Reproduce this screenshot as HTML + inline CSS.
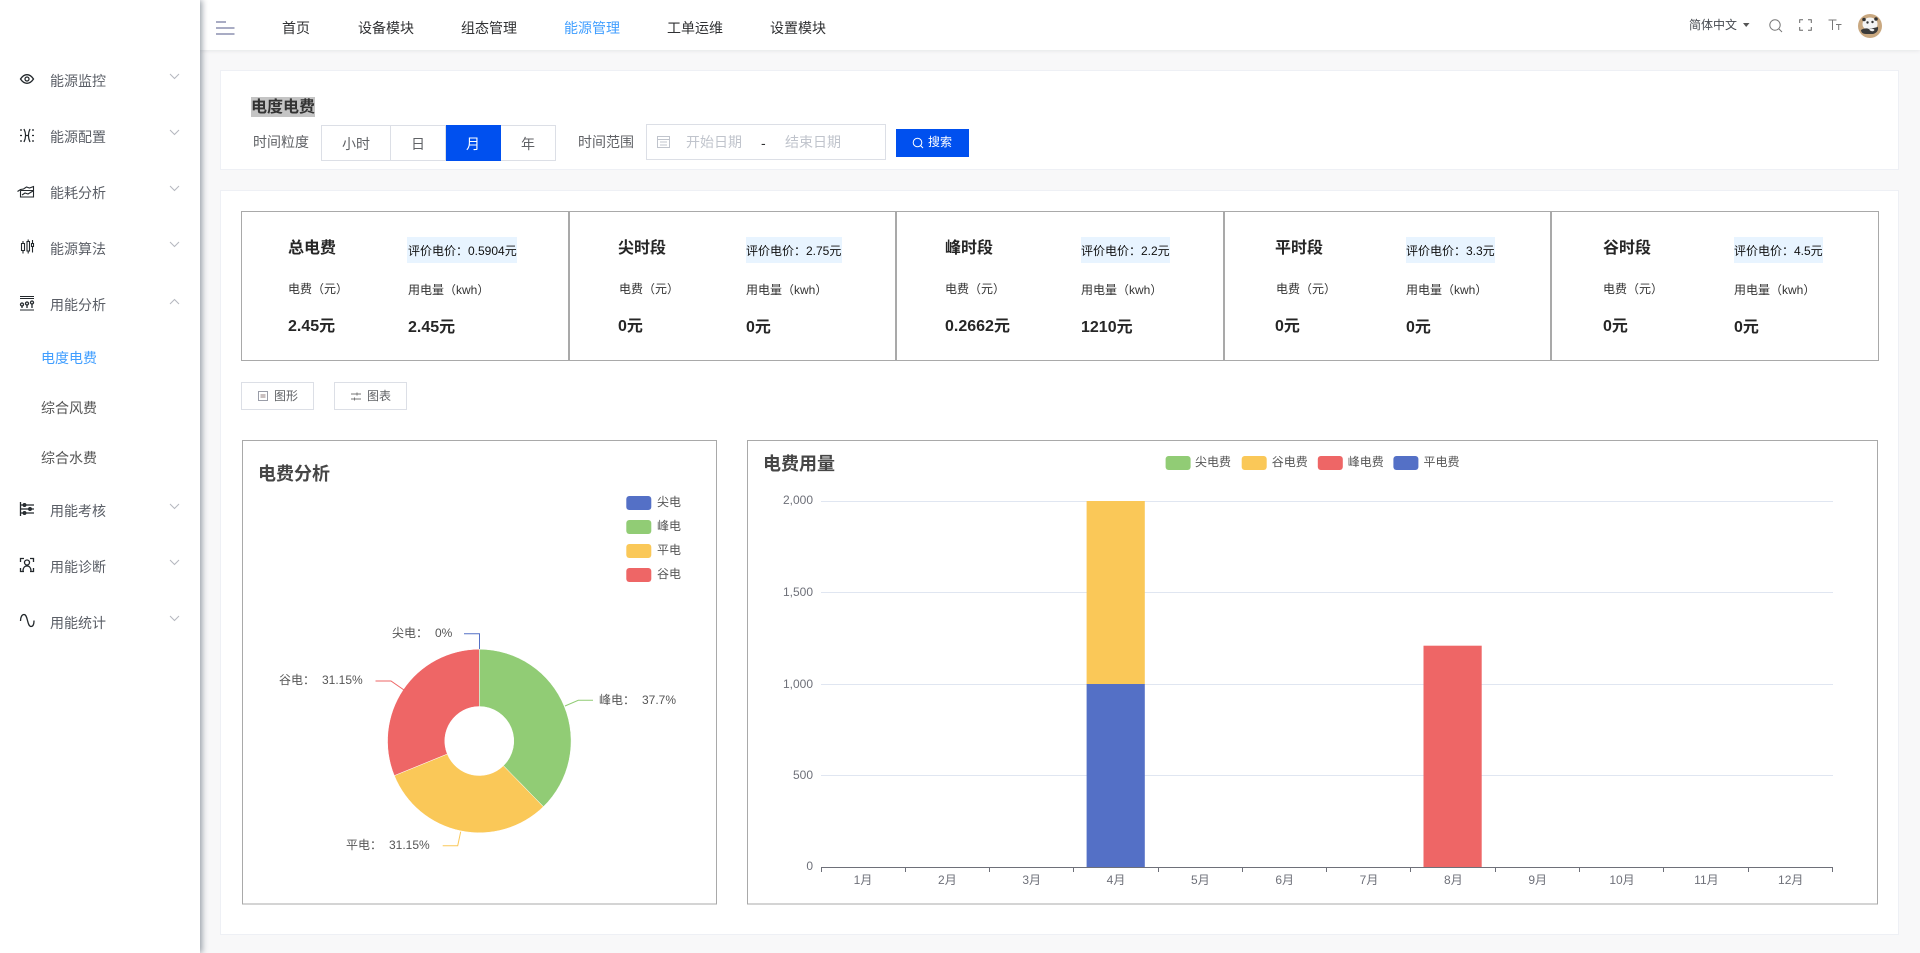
<!DOCTYPE html>
<html lang="zh"><head><meta charset="utf-8"><title>电度电费</title>
<style>
*{box-sizing:border-box}
html,body{margin:0;padding:0;width:1920px;height:953px;overflow:hidden;background:#f8f8f9;font-family:"Liberation Sans","Noto Sans CJK SC",sans-serif;color:#303133}
.a{position:absolute}
.t{position:absolute;white-space:nowrap;line-height:20px;font-size:14px}
#side{left:0;top:0;width:200px;height:953px;background:#fff;box-shadow:2px 0 6px rgba(0,21,41,.4);z-index:3}
#head{left:200px;top:0;width:1720px;height:50px;background:#fff;box-shadow:0 1px 4px rgba(0,21,41,.08)}
.panel{position:absolute;background:#fff;border:1px solid #eef0f5}
.m{color:#5a5e66}
.s{color:#555}
.cell{position:absolute;top:211px;height:150px;border:1px solid #a9a9a9}
.h{font-size:16px;font-weight:bold;color:#262626}
.l{font-size:12px;color:#333}
.b{position:absolute;top:237px;height:26px;background:#e8f4ff;font-size:12px;line-height:28px;color:#111;white-space:nowrap}
.v{font-size:16px;font-weight:bold;color:#262626}
.seg{position:absolute;top:125px;height:36px;border:1px solid #dcdfe6;border-left:0;text-align:center;line-height:36px;font-size:14px;color:#606266;background:#fff}
.btn{position:absolute;top:382px;width:73px;height:28px;border:1px solid #dcdfe6;background:#fff}
</style></head><body>

<div class="a" id="head"></div>
<svg class="a" style="left:216px;top:21px;z-index:4" width="19" height="16" viewBox="0 0 19 16"><path d="M0 1h10M0 7h18.500M0 13h18.500" stroke="#a9acc4" stroke-width="2" fill="none"/></svg>
<div class="t" style="left:282px;top:18px">首页</div>
<div class="t" style="left:358px;top:18px">设备模块</div>
<div class="t" style="left:461px;top:18px">组态管理</div>
<div class="t" style="left:564px;top:18px;color:#409eff">能源管理</div>
<div class="t" style="left:667px;top:18px">工单运维</div>
<div class="t" style="left:770px;top:18px">设置模块</div>
<div class="t" style="left:1689px;top:15px;font-size:12px;color:#45494f">简体中文</div>
<svg class="a" style="left:1742px;top:22px" width="8" height="6"><path d="M1 1h6.500L4.200 5z" fill="#555"/></svg>
<svg class="a" style="left:1768px;top:18px" width="15" height="15" viewBox="0 0 15 15"><circle cx="7" cy="7" r="5.200" stroke="#777" stroke-width="1" fill="none"/><path d="M11 11l3 3" stroke="#777" stroke-width="1"/></svg>
<svg class="a" style="left:1799px;top:19px" width="13" height="12" viewBox="0 0 13 12"><path d="M.7 4V.7H4M9 .7h3.300V4M12.300 8v3.300H9M4 11.300H.7V8" stroke="#666" stroke-width="1" fill="none"/></svg>
<svg class="a" style="left:1828px;top:19px" width="14" height="12" viewBox="0 0 14 12"><path d="M.5 1h8M4.500 1v10M8 5.500h5.500M10.700 5.500v5.500" stroke="#777" stroke-width="1" fill="none"/></svg>
<svg class="a" style="left:1858px;top:14px" width="24" height="24" viewBox="0 0 24 24"><circle cx="12" cy="12" r="12" fill="#c9a880"/><ellipse cx="12" cy="10" rx="7.500" ry="6.500" fill="#f4f4f4"/><circle cx="6" cy="5.500" r="1.800" fill="#333"/><circle cx="18" cy="5" r="1.800" fill="#333"/><circle cx="9.500" cy="8.500" r="1.200" fill="#333"/><circle cx="14.500" cy="8" r="1.200" fill="#333"/><path d="M3 16c3-2 6-2 8-1l9-2c.5 4-1.500 6-5 7H8c-3 0-5-1.500-5-4z" fill="#3a3a3a"/><path d="M11 15.500c2-1 4.500-1 5.500.5-1 1.800-3.500 1.800-5.500-.5z" fill="#eee"/></svg>

<div class="a" id="side">
<div class="t m" style="left:50px;top:71px">能源监控</div>
<div class="t m" style="left:50px;top:127px">能源配置</div>
<div class="t m" style="left:50px;top:183px">能耗分析</div>
<div class="t m" style="left:50px;top:239px">能源算法</div>
<div class="t m" style="left:50px;top:295px">用能分析</div>
<div class="t" style="left:41px;top:348px;color:#409eff">电度电费</div>
<div class="t s" style="left:41px;top:398px">综合风费</div>
<div class="t s" style="left:41px;top:448px">综合水费</div>
<div class="t m" style="left:50px;top:501px">用能考核</div>
<div class="t m" style="left:50px;top:557px">用能诊断</div>
<div class="t m" style="left:50px;top:613px">用能统计</div>
<svg class="a" style="left:0;top:0" width="200" height="640" fill="none" stroke="#23282c" stroke-width="1.300">
<path d="M20.500 79c2-3 4.500-4.300 6.500-4.300s4.500 1.300 6.500 4.300c-2 3-4.500 4.300-6.500 4.300s-4.500-1.300-6.500-4.300z"/><circle cx="27" cy="79" r="2"/>
<path d="M24 129c2 4 2 9 0 13M30 129c-2 4-2 9 0 13M25 135.500h4M20 130h2M20 135.500h2M20 141h2M32 130h2M32 135.500h2M32 141h2"/>
<path d="M20.500 190.500h13M20.500 190.500v6.500h13v-10.500l-4 1.500-3-1-3 2-3 .5-3 2M22 195l3-2 3 1 5-3" stroke-width="1.100"/>
<path d="M21.500 243.500h3v7h-3zM27 241.500h2.500v9.500H27zM31.500 243.500h2v3h-2zM23 241v2.500M23 250.500v3M28.200 239.500v2M28.200 251v2.500M32.500 240v3.500M32.500 246.500v6" stroke-width="1.100"/>
<path d="M20 296.500h14M20 310h14M20 298.500h14" stroke-width="1"/><path d="M22 308v-2M27 308v-3M32 308v-4"/><circle cx="22" cy="304.500" r="1.500"/><circle cx="27" cy="303.500" r="1.500"/><circle cx="32" cy="302.500" r="1.500"/>
<path d="M20.500 502v14M21 505h13M21 509h13M21 513h13"/><circle cx="24.500" cy="505" r="1.300"/><circle cx="30" cy="509" r="1.300"/><circle cx="24.500" cy="513" r="1.300"/>
<path d="M20.500 562v-3.500H24M30 558.500h3.500V562M33.500 568v3.500H30M24 571.500h-3.500V568"/><circle cx="27" cy="562.500" r="2.500"/><path d="M23 571c0-3 1.500-5 4-5s4 2 4 5"/>
<path d="M20.500 621c0-4 1.500-6.500 3.500-6.500 4 0 3 12 7 12 2 0 3-2 3-6"/>
<g stroke="#b5b8bf" stroke-width="1"><path d="M170 74l4.500 4.500 4.500-4.500M170 130l4.500 4.500 4.500-4.500M170 186l4.500 4.500 4.500-4.500M170 242l4.500 4.500 4.500-4.500M170 304l4.500-4.500 4.500 4.500M170 504l4.500 4.500 4.500-4.500M170 560l4.500 4.500 4.500-4.500M170 616l4.500 4.500 4.500-4.500"/></g>
</svg>
</div>

<div class="panel" style="left:220px;top:70px;width:1679px;height:100px"></div>
<div class="t" style="left:251px;top:97px;height:20px;width:64px;background:#c4c4c4;font-size:16px;line-height:22px;font-weight:bold;color:#333">电度电费</div>
<div class="t" style="left:253px;top:132px;color:#606266">时间粒度</div>
<div class="seg" style="left:321px;width:70px;border-left:1px solid #dcdfe6">小时</div>
<div class="seg" style="left:391px;width:55px">日</div>
<div class="seg" style="left:446px;width:55px;background:#0050ef;color:#fff;border-color:#0050ef">月</div>
<div class="seg" style="left:501px;width:55px">年</div>
<div class="t" style="left:578px;top:132px;color:#606266">时间范围</div>
<div class="a" style="left:646px;top:124px;width:240px;height:36px;border:1px solid #dcdfe6;background:#fff"></div>
<svg class="a" style="left:657px;top:135px" width="13" height="13" viewBox="0 0 13 13" fill="none" stroke="#c0c4cc"><path d="M.5 1.500h12v11H.5zM.5 4.500h12M3 7h7M3 10h7"/></svg>
<div class="t" style="left:686px;top:132px;color:#c0c4cc">开始日期</div>
<div class="t" style="left:761px;top:133px;color:#303133">-</div>
<div class="t" style="left:785px;top:132px;color:#c0c4cc">结束日期</div>
<div class="a" style="left:896px;top:129px;width:73px;height:28px;background:#0050ef"></div>
<svg class="a" style="left:912px;top:137px" width="12" height="12" viewBox="0 0 12 12" fill="none" stroke="#fff" stroke-width="1"><circle cx="5.500" cy="5.500" r="4.300"/><path d="M8.500 8.500l2.500 2.500"/></svg>
<div class="t" style="left:928px;top:132px;font-size:12px;color:#fff">搜索</div>

<div class="panel" style="left:220px;top:190px;width:1679px;height:745px"></div>

<div class="cell" style="left:241px;width:328px"></div>
<div class="cell" style="left:569px;width:327px"></div>
<div class="cell" style="left:896px;width:328px"></div>
<div class="cell" style="left:1224px;width:327px"></div>
<div class="cell" style="left:1551px;width:328px"></div>

<div class="t h" style="left:288px;top:239px">总电费</div>
<div class="b" style="left:407px;width:110px;padding-left:1px">评价电价：0.5904元</div>
<div class="t l" style="left:288px;top:279px">电费（元）</div>
<div class="t l" style="left:408px;top:280px">用电量（kwh）</div>
<div class="t v" style="left:288px;top:317px">2.45元</div>
<div class="t v" style="left:408px;top:318px">2.45元</div>

<div class="t h" style="left:618px;top:239px">尖时段</div>
<div class="b" style="left:746px;width:96px">评价电价：2.75元</div>
<div class="t l" style="left:619px;top:279px">电费（元）</div>
<div class="t l" style="left:746px;top:280px">用电量（kwh）</div>
<div class="t v" style="left:618px;top:317px">0元</div>
<div class="t v" style="left:746px;top:318px">0元</div>

<div class="t h" style="left:945px;top:239px">峰时段</div>
<div class="b" style="left:1081px;width:89px">评价电价：2.2元</div>
<div class="t l" style="left:945px;top:279px">电费（元）</div>
<div class="t l" style="left:1081px;top:280px">用电量（kwh）</div>
<div class="t v" style="left:945px;top:317px">0.2662元</div>
<div class="t v" style="left:1081px;top:318px">1210元</div>

<div class="t h" style="left:1275px;top:239px">平时段</div>
<div class="b" style="left:1406px;width:89px">评价电价：3.3元</div>
<div class="t l" style="left:1276px;top:279px">电费（元）</div>
<div class="t l" style="left:1406px;top:280px">用电量（kwh）</div>
<div class="t v" style="left:1275px;top:317px">0元</div>
<div class="t v" style="left:1406px;top:318px">0元</div>

<div class="t h" style="left:1603px;top:239px">谷时段</div>
<div class="b" style="left:1734px;width:89px">评价电价：4.5元</div>
<div class="t l" style="left:1603px;top:279px">电费（元）</div>
<div class="t l" style="left:1734px;top:280px">用电量（kwh）</div>
<div class="t v" style="left:1603px;top:317px">0元</div>
<div class="t v" style="left:1734px;top:318px">0元</div>

<div class="btn" style="left:241px"></div>
<div class="btn" style="left:334px"></div>
<svg class="a" style="left:258px;top:391px" width="10" height="10" fill="none"><rect x=".5" y=".5" width="9" height="9" stroke="#9a9da8"/><rect x="2.500" y="3" width="5" height="4" fill="#c9c0c0"/></svg>
<svg class="a" style="left:351px;top:392px" width="10" height="9" fill="none" stroke="#777"><path d="M0 2h10M0 7h10M6 .5v3M3.500 5.500v3"/></svg>
<div class="t" style="left:274px;top:386px;font-size:12px;color:#606266">图形</div>
<div class="t" style="left:367px;top:386px;font-size:12px;color:#606266">图表</div>

<svg class="a" style="left:0;top:0" width="1920" height="953" font-family="'Liberation Sans','Noto Sans CJK SC',sans-serif" font-size="12" fill="#555">
<rect x="242.500" y="440.500" width="474" height="463.500" fill="#fff" stroke="#a9a9a9" stroke-width="1"/>
<rect x="747.500" y="440.500" width="1130" height="463.500" fill="#fff" stroke="#a9a9a9" stroke-width="1"/>
<text x="258" y="480" font-size="18" font-weight="bold" fill="#464646">电费分析</text>
<text x="763" y="470" font-size="18" font-weight="bold" fill="#464646">电费用量</text>

<rect x="626.300" y="496" width="25" height="14" rx="3" fill="#5470c6"/><text x="657" y="506">尖电</text>
<rect x="626.300" y="520" width="25" height="14" rx="3" fill="#91cc75"/><text x="657" y="530">峰电</text>
<rect x="626.300" y="544" width="25" height="14" rx="3" fill="#fac858"/><text x="657" y="554">平电</text>
<rect x="626.300" y="568" width="25" height="14" rx="3" fill="#ee6666"/><text x="657" y="578">谷电</text>

<path d="M479.300 649.200A91.800 91.800 0 0 1 543.400 806.700L503.400 765.700A34.500 34.500 0 0 0 479.300 706.500Z" fill="#91cc75" stroke="#fff" stroke-width=".5"/>
<path d="M543.400 806.700A91.800 91.800 0 0 1 394.300 775.600L447.300 754A34.500 34.500 0 0 0 503.400 765.700Z" fill="#fac858" stroke="#fff" stroke-width=".5"/>
<path d="M394.300 775.600A91.800 91.800 0 0 1 479.300 649.200L479.300 706.500A34.500 34.500 0 0 0 447.300 754Z" fill="#ee6666" stroke="#fff" stroke-width=".5"/>
<g fill="none"><path d="M464 633.700h15.500V649" stroke="#5470c6"/><path d="M375.500 681H391l13 9" stroke="#ee6666"/><path d="M593 700.300h-14.700L565 706" stroke="#91cc75"/><path d="M442.700 845.700h15l3-14" stroke="#fac858"/></g>
<text x="392" y="637">尖电：</text><text x="435" y="637">0%</text>
<text x="279" y="684">谷电：</text><text x="322" y="684">31.15%</text>
<text x="599" y="704">峰电：</text><text x="642" y="704">37.7%</text>
<text x="346" y="849">平电：</text><text x="389" y="849">31.15%</text>

<rect x="1165.600" y="456" width="25" height="14" rx="3" fill="#91cc75"/><text x="1195" y="466">尖电费</text>
<rect x="1241.700" y="456" width="25" height="14" rx="3" fill="#fac858"/><text x="1271.700" y="466">谷电费</text>
<rect x="1317.800" y="456" width="25" height="14" rx="3" fill="#ee6666"/><text x="1347.800" y="466">峰电费</text>
<rect x="1393.400" y="456" width="25" height="14" rx="3" fill="#5470c6"/><text x="1423.500" y="466">平电费</text>

<path d="M821 501.500H1833M821 592.500H1833M821 684.500H1833M821 775.500H1833" stroke="#e0e6f1" stroke-width="1"/>
<rect x="1086.600" y="501" width="58.200" height="183" fill="#fac858"/>
<rect x="1086.600" y="684" width="58.200" height="183.300" fill="#5470c6"/>
<rect x="1423.500" y="645.700" width="58.200" height="221.600" fill="#ee6666"/>
<path d="M821 867.500H1833M821.500 867v5M905.500 867v5M989.500 867v5M1073.500 867v5M1158.500 867v5M1242.500 867v5M1326.500 867v5M1410.500 867v5M1495.500 867v5M1579.500 867v5M1663.500 867v5M1748.500 867v5M1832.500 867v5" stroke="#6e7079" stroke-width="1" fill="none"/>
<g fill="#6e7079" text-anchor="end"><text x="813" y="504">2,000</text><text x="813" y="596">1,500</text><text x="813" y="688">1,000</text><text x="813" y="779">500</text><text x="813" y="870">0</text></g>
<g fill="#6e7079" text-anchor="middle"><text x="863" y="884">1月</text><text x="947.400" y="884">2月</text><text x="1031.700" y="884">3月</text><text x="1116" y="884">4月</text><text x="1200.400" y="884">5月</text><text x="1284.700" y="884">6月</text><text x="1369" y="884">7月</text><text x="1453.400" y="884">8月</text><text x="1537.700" y="884">9月</text><text x="1622" y="884">10月</text><text x="1706.400" y="884">11月</text><text x="1790.700" y="884">12月</text></g>
</svg>
</body></html>
